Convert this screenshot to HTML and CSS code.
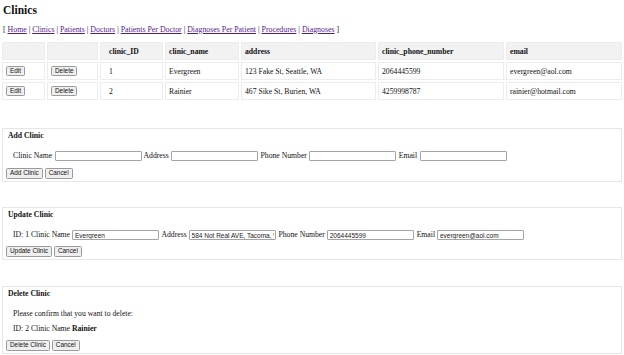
FILE: index.html
```html
<!DOCTYPE html>
<html lang="en">

<head>
    <meta charset="UTF-8">
    <meta name="viewport" content="width=device-width, initial-scale=1.0">
    <title>Clinics</title>
    <link rel="stylesheet" href="styles.css">
</head>

<body>
    <h1>Clinics</h1>
    <p class="nav">[ <a href="#">Home</a> | <a href="#">Clinics</a> | <a href="#">Patients</a> | <a href="#">Doctors</a> | <a href="#">Patients Per Doctor</a> | <a href="#">Diagnoses Per Patient</a> | <a href="#">Procedures</a> | <a href="#">Diagnoses</a> ]</p>

    <table class="clinics">
        <thead>
            <tr>
                <th class="c-edit"></th>
                <th class="c-del"></th>
                <th class="c-id">clinic_ID</th>
                <th class="c-name">clinic_name</th>
                <th class="c-addr">address</th>
                <th class="c-phone">clinic_phone_number</th>
                <th class="c-email">email</th>
            </tr>
        </thead>
        <tbody>
            <tr>
                <td><button>Edit</button></td>
                <td><button>Delete</button></td>
                <td class="c-id">1</td>
                <td>Evergreen</td>
                <td>123 Fake St, Seattle, WA</td>
                <td>2064445599</td>
                <td>evergreen@aol.com</td>
            </tr>
            <tr>
                <td><button>Edit</button></td>
                <td><button>Delete</button></td>
                <td class="c-id">2</td>
                <td>Rainier</td>
                <td>467 Sike St, Burien, WA</td>
                <td>4259998787</td>
                <td>rainier@hotmail.com</td>
            </tr>
        </tbody>
    </table>

    <div class="panel add-panel">
        <p class="panel-title">Add Clinic</p>
        <div class="fields">
            <label>Clinic Name</label> <input type="text">
            <label>Address</label> <input type="text">
            <label>Phone Number</label> <input type="text">
            <label>Email</label> <input type="text">
        </div>
        <div class="actions">
            <button>Add Clinic</button> <button>Cancel</button>
        </div>
    </div>

    <div class="panel update-panel">
        <p class="panel-title">Update Clinic</p>
        <div class="fields">
            ID: 1 <label>Clinic Name</label> <input type="text" value="Evergreen">
            <label>Address</label> <input type="text" value="584 Not Real AVE, Tacoma, WA">
            <label>Phone Number</label> <input type="text" value="2064445599">
            <label>Email</label> <input type="text" value="evergreen@aol.com">
        </div>
        <div class="actions">
            <button>Update Clinic</button> <button>Cancel</button>
        </div>
    </div>

    <div class="panel delete-panel">
        <p class="panel-title">Delete Clinic</p>
        <p class="confirm">Please confirm that you want to delete:</p>
        <p class="target">ID: 2 Clinic Name <strong>Rainier</strong></p>
        <div class="actions">
            <button>Delete Clinic</button> <button>Cancel</button>
        </div>
    </div>
</body>

</html>
```

FILE: styles.css
```css
body {
    margin: 0;
    font-family: "Liberation Serif", "Times New Roman", serif;
    font-size: 7.7px;
    color: #111;
    background: #fff;
}

h1 {
    margin: 0;
    padding: 2.5px 0 0 3px;
    font-size: 11.5px;
    line-height: 14px;
}

.nav {
    margin: 8px 0 0;
    padding-left: 3px;
    font-size: 7.85px;
    line-height: 10px;
}

.nav a {
    color: #551a8b;
}

button {
    font-family: "Liberation Sans", Arial, sans-serif;
    font-size: 6.4px;
    height: 10.5px;
    line-height: 8px;
    padding: 0 3px;
    color: #111;
    background: #efefef;
    border: 1px solid #9a9a9a;
    border-radius: 1.5px;
    vertical-align: top;
}

input {
    box-sizing: border-box;
    width: 87px;
    height: 10px;
    margin: 0 0.5px;
    padding: 0 1.5px;
    font-family: "Liberation Sans", Arial, sans-serif;
    font-size: 6.5px;
    color: #222;
    border: 1px solid #a5a5a5;
    border-radius: 1px;
    vertical-align: top;
}

/* table */
.clinics {
    width: 624px;
    margin-top: 5.5px;
    border-spacing: 2px;
    table-layout: fixed;
}

.clinics th,
.clinics td {
    box-sizing: border-box;
    height: 18px;
    padding: 0 3px;
    text-align: left;
    vertical-align: middle;
    border: 1px solid #ececec;
}

.clinics th {
    background: #f2f2f2;
    font-weight: bold;
}

.clinics td button {
    vertical-align: middle;
}

.c-edit { width: 43px; }
.c-del { width: 51px; }
.c-id { width: 63px; }
.c-name { width: 74px; }
.c-addr { width: 135px; }
.c-phone { width: 126px; }
.c-email { width: 116px; }

.clinics .c-id {
    padding-left: 8px;
}

/* forms */
.panel {
    margin: 0 2px;
    padding: 2px 3px 2px;
    border: 1px solid #e6e6e6;
}

.add-panel {
    margin-top: 26px;
}

.update-panel {
    margin-top: 25px;
}

.delete-panel {
    margin-top: 26px;
}

.panel-title {
    margin: 0 0 0 2px;
    font-weight: bold;
    line-height: 10px;
}

.fields {
    margin-top: 10px;
    padding-left: 7px;
    line-height: 10px;
    white-space: nowrap;
}

.actions {
    margin-top: 6px;
    line-height: 11px;
}

.add-panel .actions {
    margin-top: 7px;
}

.confirm,
.target {
    margin: 0;
    padding-left: 7px;
    line-height: 10px;
}

.confirm {
    margin-top: 10px;
}

.target {
    margin-top: 5px;
}

.delete-panel .actions {
    margin-top: 6px;
}
```
